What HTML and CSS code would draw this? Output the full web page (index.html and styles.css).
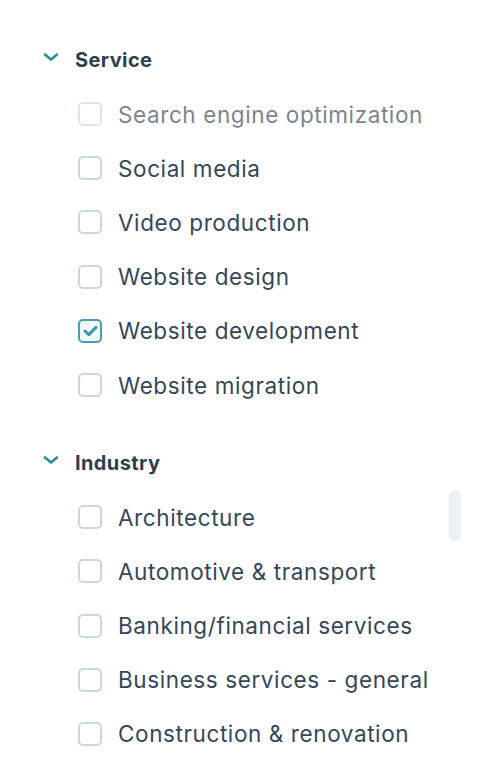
FILE: index.html
```html
<!DOCTYPE html>
<html>
<head>
<meta charset="utf-8">
<link rel="stylesheet" href="styles.css">
</head>
<body>
<div class="filters">
  <section class="group">
    <div class="group-head">
      <svg class="chev" width="16" height="10" viewBox="0 0 16 10"><path d="M2 2.5 L8 7.5 L14 2.5" fill="none" stroke="#2b8ca3" stroke-width="2.6" stroke-linecap="round" stroke-linejoin="round"/></svg>
      <span class="group-title">Service</span>
    </div>
    <ul class="opts">
      <li class="opt disabled"><span class="box"></span><span class="lbl">Search engine optimization</span></li>
      <li class="opt"><span class="box"></span><span class="lbl">Social media</span></li>
      <li class="opt"><span class="box"></span><span class="lbl">Video production</span></li>
      <li class="opt"><span class="box"></span><span class="lbl">Website design</span></li>
      <li class="opt checked"><span class="box"><svg width="15" height="12" viewBox="0 0 15 12"><path d="M2 6 L5.8 9.6 L13 2.4" fill="none" stroke="#3f97ab" stroke-width="3" stroke-linecap="round" stroke-linejoin="round"/></svg></span><span class="lbl">Website development</span></li>
      <li class="opt"><span class="box"></span><span class="lbl">Website migration</span></li>
    </ul>
  </section>
  <section class="group">
    <div class="group-head">
      <svg class="chev" width="16" height="10" viewBox="0 0 16 10"><path d="M2 2.5 L8 7.5 L14 2.5" fill="none" stroke="#2b8ca3" stroke-width="2.6" stroke-linecap="round" stroke-linejoin="round"/></svg>
      <span class="group-title">Industry</span>
    </div>
    <div class="scroll-wrap">
      <ul class="opts">
        <li class="opt"><span class="box"></span><span class="lbl">Architecture</span></li>
        <li class="opt"><span class="box"></span><span class="lbl">Automotive &amp; transport</span></li>
        <li class="opt"><span class="box"></span><span class="lbl">Banking/financial services</span></li>
        <li class="opt"><span class="box"></span><span class="lbl">Business services - general</span></li>
        <li class="opt"><span class="box"></span><span class="lbl">Construction &amp; renovation</span></li>
      </ul>
      <div class="thumb"></div>
    </div>
  </section>
</div>
</body>
</html>
```
FILE: styles.css
```css
html, body {
  margin: 0;
  padding: 0;
  background: #ffffff;
}
body {
  font-family: "Inter", "Noto Sans", sans-serif;
  color: #33475b;
  width: 491px;
  height: 762px;
  overflow: hidden;
}
.filters {
  padding-top: 33px;
  padding-left: 43px;
  display: flex;
  flex-direction: column;
  gap: 24px;
}
.group-head {
  height: 54px;
  display: flex;
  align-items: center;
  gap: 16px;
}
.chev {
  display: block;
  margin-top: -6px;
}
.group-title {
  font-size: 20px;
  font-weight: 700;
  color: #2d3e50;
  letter-spacing: 0.4px;
}
.scroll-wrap {
  position: relative;
}
.opts {
  list-style: none;
  margin: 0;
  padding: 0 0 0 35px;
}
.opt {
  height: 54.2px;
  display: flex;
  align-items: center;
  gap: 16px;
}
.box {
  width: 24px;
  height: 24px;
  box-sizing: border-box;
  border: 2px solid #cbd6e2;
  border-radius: 5px;
  background: #fff;
  display: flex;
  align-items: center;
  justify-content: center;
  flex: none;
}
.lbl {
  font-size: 22.5px;
  color: #33475b;
  letter-spacing: 0.6px;
}
.disabled .box {
  border-color: #dfe5ec;
}
.disabled .lbl {
  color: #7a8590;
}
.checked .box {
  border-color: #4a9cb0;
  border-width: 2.5px;
  background: #f3fafc;
}
.thumb {
  position: absolute;
  left: 406px;
  top: 0;
  width: 12px;
  height: 51px;
  border-radius: 6px;
  background: #eaf0f6;
}
```
